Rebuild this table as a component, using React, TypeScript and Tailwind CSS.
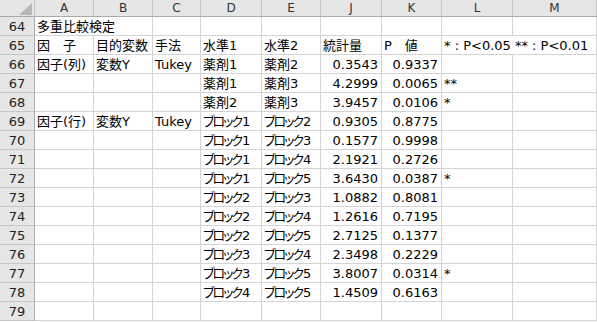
import React from 'react';

const cols = [
  { key: 'A', w: 59 },
  { key: 'B', w: 59 },
  { key: 'C', w: 48 },
  { key: 'D', w: 61 },
  { key: 'E', w: 59 },
  { key: 'J', w: 61 },
  { key: 'K', w: 60 },
  { key: 'L', w: 71 },
  { key: 'M', w: 84 },
];

type Cell = { text?: string; right?: boolean; span?: number };

const blank = (n: number): Cell[] => Array.from({ length: n }, () => ({}));

const pair = (d: string, e: string, j: string, k: string, l = ''): Cell[] => [
  ...blank(3),
  { text: d },
  { text: e },
  { text: j, right: true },
  { text: k, right: true },
  { text: l },
  {},
];

const rows: { n: number; cells: Cell[] }[] = [
  { n: 64, cells: [{ text: '多重比較検定', span: 2 }, ...blank(7)] },
  {
    n: 65,
    cells: [
      { text: '因　子' },
      { text: '目的変数' },
      { text: '手法' },
      { text: '水準1' },
      { text: '水準2' },
      { text: '統計量' },
      { text: 'P　値' },
      { text: '* : P<0.05 ** : P<0.01', span: 2 },
    ],
  },
  {
    n: 66,
    cells: [
      { text: '因子(列)' },
      { text: '変数Y' },
      { text: 'Tukey' },
      { text: '薬剤1' },
      { text: '薬剤2' },
      { text: '0.3543', right: true },
      { text: '0.9337', right: true },
      {},
      {},
    ],
  },
  { n: 67, cells: pair('薬剤1', '薬剤3', '4.2999', '0.0065', '**') },
  { n: 68, cells: pair('薬剤2', '薬剤3', '3.9457', '0.0106', '*') },
  {
    n: 69,
    cells: [
      { text: '因子(行)' },
      { text: '変数Y' },
      { text: 'Tukey' },
      { text: 'ブロック1' },
      { text: 'ブロック2' },
      { text: '0.9305', right: true },
      { text: '0.8775', right: true },
      {},
      {},
    ],
  },
  { n: 70, cells: pair('ブロック1', 'ブロック3', '0.1577', '0.9998') },
  { n: 71, cells: pair('ブロック1', 'ブロック4', '2.1921', '0.2726') },
  { n: 72, cells: pair('ブロック1', 'ブロック5', '3.6430', '0.0387', '*') },
  { n: 73, cells: pair('ブロック2', 'ブロック3', '1.0882', '0.8081') },
  { n: 74, cells: pair('ブロック2', 'ブロック4', '1.2616', '0.7195') },
  { n: 75, cells: pair('ブロック2', 'ブロック5', '2.7125', '0.1377') },
  { n: 76, cells: pair('ブロック3', 'ブロック4', '2.3498', '0.2229') },
  { n: 77, cells: pair('ブロック3', 'ブロック5', '3.8007', '0.0314', '*') },
  { n: 78, cells: pair('ブロック4', 'ブロック5', '1.4509', '0.6163') },
  { n: 79, cells: blank(9) },
];

const font = { fontFamily: "'DejaVu Sans', 'Noto Sans CJK JP', sans-serif", fontFeatureSettings: '"palt"' };

// katakana in the sheet font is narrow, so squeeze it a bit
const renderText = (t?: string) => {
  if (t && t.startsWith('ブロック')) {
    return (
      <>
        <span className="tracking-[-2px]">ブロック</span>
        <span className="ml-[1px]">{t.slice(4)}</span>
      </>
    );
  }
  return t;
};

export default function App() {
  return (
    <div className="w-[597px] h-[322px] overflow-hidden bg-white text-black" style={font}>
      {/* column headers */}
      <div className="flex h-[17px] bg-[#e6e6e6] border-b border-[#a9a9a9]">
        <div className="w-[35px] shrink-0 border-r border-[#c6c6c6] flex items-end justify-end pr-[2px] pb-[1px]">
          <svg width="13" height="12" viewBox="0 0 13 12">
            <polygon points="13,0 13,12 0,12" fill="#b7b7b7" />
          </svg>
        </div>
        {cols.map((c) => (
          <div
            key={c.key}
            className="shrink-0 border-r border-[#c6c6c6] flex items-center justify-center text-[12px] text-[#333] leading-none"
            style={{ width: c.w }}
          >
            {c.key}
          </div>
        ))}
      </div>

      {rows.map((r) => {
        let ci = 0;
        return (
          <div key={r.n} className="flex h-[19px]">
            <div className="w-[35px] shrink-0 bg-[#e6e6e6] border-r border-b border-r-[#a9a9a9] border-b-[#c6c6c6] flex items-center justify-center text-[13px] text-[#222] leading-none">
              {r.n}
            </div>
            {r.cells.map((cell, i) => {
              const span = cell.span || 1;
              const w = cols.slice(ci, ci + span).reduce((s, c) => s + c.w, 0);
              ci += span;
              return (
                <div
                  key={i}
                  className={`shrink-0 border-r border-b border-[#d4d4d4] flex items-center text-[13px] leading-none whitespace-nowrap overflow-hidden ${
                    cell.right ? 'justify-end pr-[3px]' : 'pl-[2px]'
                  }`}
                  style={{ width: w }}
                >
                  {renderText(cell.text)}
                </div>
              );
            })}
          </div>
        );
      })}
    </div>
  );
}
